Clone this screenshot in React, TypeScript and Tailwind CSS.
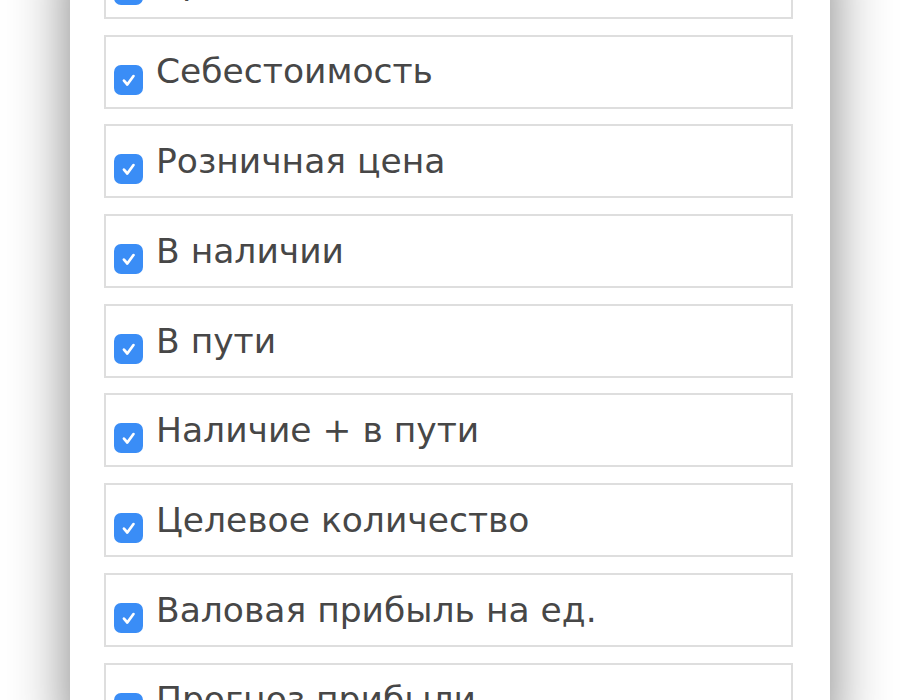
// Список колонок отчёта с чекбоксами
const COLUMNS = [
  'Производитель',
  'Себестоимость',
  'Розничная цена',
  'В наличии',
  'В пути',
  'Наличие + в пути',
  'Целевое количество',
  'Валовая прибыль на ед.',
  'Прогноз прибыли',
]

function CheckBox() {
  return (
    <span className="flex-shrink-0 w-[29px] h-[30px] rounded-[7px] bg-[#3a8df6] flex items-center justify-center mt-[16px]">
      <svg width="18" height="18" viewBox="0 0 16 16" fill="none">
        <path d="M3.5 8.5 L6.5 12 L12 4.5" stroke="white" strokeWidth="2.4" strokeLinecap="round" strokeLinejoin="round" />
      </svg>
    </span>
  )
}

export default function App() {
  return (
    <div className="w-[900px] h-[700px] overflow-hidden bg-white">
      <div className="ml-[70px] w-[760px] h-[800px] -mt-[55px] bg-white shadow-[0_0_55px_rgba(0,0,0,0.5)] pl-[34px] pr-[37px]">
        <div className="flex flex-col gap-[15.7px]">
          {COLUMNS.map(name => (
            <label
              key={name}
              className="h-[74px] border-2 border-[#dedede] flex items-center gap-[13px] pl-[8px]"
            >
              <CheckBox />
              <span className="text-[#474747] text-[34.5px] font-['DejaVu_Sans',sans-serif] leading-none">{name}</span>
            </label>
          ))}
        </div>
      </div>
    </div>
  )
}
